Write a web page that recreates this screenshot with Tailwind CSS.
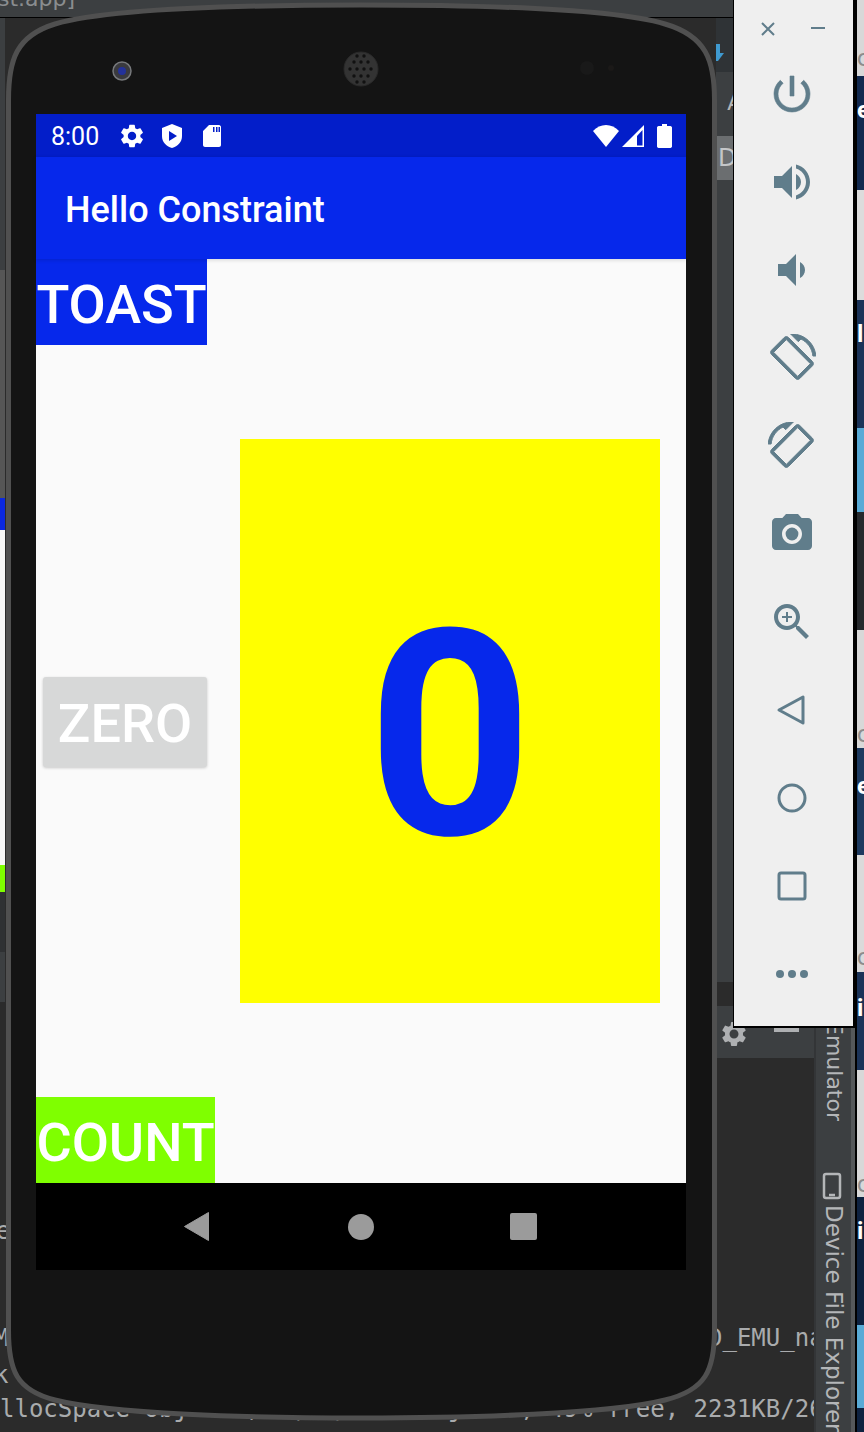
<!DOCTYPE html>
<html lang="en">
<head>
    <meta charset="UTF-8">
    <title>Hello Constraint - Emulator</title>
    <script src="https://cdn.jsdelivr.net/npm/@tailwindcss/browser@4"></script>
</head>
<body class="bg-[#2b2b2b]">
    <div class="relative w-[864px] h-[1432px] overflow-hidden bg-[#2b2b2b] font-['Roboto',sans-serif]">

        <!-- IDE behind the emulator -->
        <div class="absolute left-0 top-0 w-[864px] h-[18px] bg-[#3c3f41] border-b border-black">
            <span class="absolute left-[-2px] top-[-13px] text-[22px] leading-[24px] text-[#8a8d8f] font-['DejaVu_Sans',sans-serif]">st.app]</span>
        </div>
        <div class="absolute left-0 top-[18px] w-[5px] h-[1414px] flex flex-col">
            <div class="h-[252px] bg-[#3c3f41]"></div>
            <div class="h-[228px] bg-[#565656]"></div>
            <div class="h-[32px] bg-[#0a28e0]"></div>
            <div class="h-[335px] bg-[#f7f7f7]"></div>
            <div class="h-[27px] bg-[#7fff00]"></div>
            <div class="h-[60px] bg-[#2f3133]"></div>
            <div class="h-[50px] bg-[#3c3f41]"></div>
            <div class="flex-1 bg-[#2b2b2b]"></div>
        </div>
        <div class="absolute left-[716px] top-[18px] w-[17px] h-[1010px] flex flex-col overflow-hidden">
            <div class="h-[54px] bg-[#2f3336]"></div>
            <div class="h-[64px] bg-[#3c3f41] text-[#b5b5b5] text-[24px] leading-[60px] pl-[11px]">A</div>
            <div class="h-[44px] bg-[#6b6e70] text-[#c4c6c8] text-[24px] leading-[44px] pl-[2px] font-['DejaVu_Sans',sans-serif]">De</div>
            <div class="flex-1 bg-[#3c3f41]"></div>
            <div class="h-[46px] bg-[#2b2b2b]"></div>
        </div>
        <svg class="absolute left-[712px] top-[44px] w-[14px] h-[18px]" viewBox="0 0 14 18"><path fill="#3f9ad0" d="M4 0 H8 V9 H12 L6 17 H4 Z"/></svg>
        <div class="absolute left-[716px] top-[1006px] w-[98px] h-[52px] bg-[#3c3f41]">
            <svg class="absolute left-[3px] top-[13px] w-[30px] h-[30px] fill-[#aeb0b2]" viewBox="0 0 24 24"><path d="M19.14 12.94c.04-.3.06-.61.06-.94 0-.32-.02-.64-.07-.94l2.03-1.58c.18-.14.23-.41.12-.61l-1.92-3.32c-.12-.22-.37-.29-.59-.22l-2.39.96c-.5-.38-1.03-.7-1.62-.94l-.36-2.54c-.04-.24-.24-.41-.48-.41h-3.84c-.24 0-.43.17-.47.41l-.36 2.54c-.59.24-1.13.57-1.62.94l-2.39-.96c-.22-.08-.47 0-.59.22L2.74 8.87c-.12.21-.08.47.12.61l2.03 1.58c-.05.3-.09.63-.09.94s.02.64.07.94l-2.03 1.58c-.18.14-.23.41-.12.61l1.92 3.32c.12.22.37.29.59.22l2.39-.96c.5.38 1.03.7 1.62.94l.36 2.54c.05.24.24.41.48.41h3.84c.24 0 .44-.17.47-.41l.36-2.54c.59-.24 1.13-.56 1.62-.94l2.39.96c.22.08.47 0 .59-.22l1.92-3.32c.12-.22.07-.47-.12-.61l-2.01-1.58zM12 15.6c-1.98 0-3.6-1.62-3.6-3.6s1.62-3.6 3.6-3.6 3.6 1.62 3.6 3.6-1.62 3.6-3.6 3.6z"/></svg>
            <div class="absolute left-[58px] top-[21px] w-[25px] h-[5px] bg-[#aeb0b2]"></div>
        </div>

        <!-- log output -->
        <div class="absolute left-[-4px] top-[1213px] text-[24px] text-[#a9abad] font-['DejaVu_Sans_Mono',monospace]">e</div>
        <div class="absolute left-[-6px] top-[1320px] text-[24px] text-[#a9abad] font-['DejaVu_Sans_Mono',monospace]">M</div>
        <div class="absolute left-[-6px] top-[1357px] text-[24px] text-[#a9abad] font-['DejaVu_Sans_Mono',monospace]">k</div>
        <div class="absolute left-0 top-[1391px] text-[24px] text-[#a9abad] whitespace-nowrap font-['DejaVu_Sans_Mono',monospace]">llocSpace objects, 0(0B) LOS objects, 49% free, 2231KB/26MB</div>
        <div class="absolute left-[708px] top-[1320px] text-[24px] text-[#a9abad] whitespace-nowrap font-['DejaVu_Sans_Mono',monospace]">D_EMU_nav</div>

        <!-- IDE tool strip -->
        <div class="absolute left-[814px] top-[1020px] w-[41px] h-[412px] bg-[#3c3f41] border-l-2 border-r-4 border-l-[#333537] border-r-[#55585a] text-[#b4b6b8] font-['DejaVu_Sans',sans-serif]">
            <div class="absolute left-[3px] top-[1px] text-[22px] leading-[30px] [writing-mode:vertical-rl]">Emulator</div>
            <svg class="absolute left-[5px] top-[152px] w-[22px] h-[28px] fill-none stroke-[#b4b6b8] stroke-[2.5]" viewBox="0 0 22 28"><rect x="3" y="2" width="16" height="24" rx="2"/><path d="M8 23h6"/></svg>
            <div class="absolute left-[3px] top-[185px] text-[23px] leading-[30px] whitespace-nowrap [writing-mode:vertical-rl]">Device File Explorer</div>
        </div>

        <!-- desktop wallpaper strip -->
        <div class="absolute left-[855px] top-0 w-[9px] h-[1432px] flex flex-col overflow-hidden border-l-2 border-black text-[24px] font-bold leading-none">
            <div class="h-[76px] bg-[#d8d8d8] text-[#8d8d8d] font-normal pt-[46px]">oo</div>
            <div class="h-[114px] bg-[#12294f] text-white pt-[22px]">e</div>
            <div class="h-[110px] bg-[#dcdcdc]"></div>
            <div class="h-[128px] bg-[#1b3358] text-white pt-[22px]">l</div>
            <div class="h-[84px] bg-[#58aad6]"></div>
            <div class="h-[118px] bg-[#26292d]"></div>
            <div class="h-[118px] bg-[#d8d8d8] text-[#8d8d8d] font-normal pt-[92px]">oo</div>
            <div class="h-[107px] bg-[#1d3a5f] text-white pt-[26px]">e</div>
            <div class="h-[117px] bg-[#dadada] text-[#8d8d8d] font-normal pt-[90px]">oo</div>
            <div class="h-[98px] bg-[#1b3358] text-white pt-[24px]">i</div>
            <div class="h-[127px] bg-[#d8d8d8] text-[#8d8d8d] font-normal pt-[102px]">oo</div>
            <div class="h-[128px] bg-[#0e2240] text-white pt-[22px]">i</div>
            <div class="h-[83px] bg-[#58aad6]"></div>
            <div class="flex-1 bg-[#0e2240]"></div>
        </div>

        <!-- phone body -->
        <svg class="absolute left-0 top-0 w-[864px] h-[1432px]" viewBox="0 0 864 1432">
            <path d="M8.500 100 C8.500 60 16 36 55 24 C110 8 250 5 361 5 C470 5 610 8 665 24 C706 36 714.500 60 714.500 100 L714.500 1330 C714.500 1370 706 1390 665 1400 C610 1414 470 1418 361 1418 C250 1418 110 1414 55 1400 C16 1390 8.500 1370 8.500 1330 Z" fill="#141414" stroke="#505050" stroke-width="5"/>
            <circle cx="122" cy="71" r="9" fill="#3a3a3e" stroke="#77797c" stroke-width="1.500"/>
            <circle cx="122" cy="71" r="4" fill="#23319a"/>
            <circle cx="361" cy="69" r="17" fill="#333333" stroke="#2a2a2a"/>
            <g fill="#111111">
                <circle cx="354" cy="62" r="1.700"/><circle cx="361" cy="62" r="1.700"/><circle cx="368" cy="62" r="1.700"/>
                <circle cx="350" cy="69" r="1.700"/><circle cx="357" cy="69" r="1.700"/><circle cx="364" cy="69" r="1.700"/><circle cx="371" cy="69" r="1.700"/>
                <circle cx="354" cy="76" r="1.700"/><circle cx="361" cy="76" r="1.700"/><circle cx="368" cy="76" r="1.700"/>
                <circle cx="357" cy="56" r="1.700"/><circle cx="364" cy="56" r="1.700"/><circle cx="357" cy="82" r="1.700"/><circle cx="364" cy="82" r="1.700"/>
            </g>
            <circle cx="587" cy="68" r="7" fill="#191919"/>
            <circle cx="611" cy="68" r="3" fill="#1b1918"/>
        </svg>

        <!-- emulator screen -->
        <div class="absolute left-[36px] top-[114px] w-[650px] h-[1156px] flex flex-col">
            <div class="h-[43px] bg-[#031ec9] flex items-center text-white pl-[15px] pr-[14px]">
                <span class="text-[25px] leading-none w-[67px] mt-[2px]">8:00</span>
                <svg class="w-[28px] h-[28px] fill-white mr-[15px]" viewBox="0 0 24 24"><path d="M19.14 12.94c.04-.3.06-.61.06-.94 0-.32-.02-.64-.07-.94l2.03-1.58c.18-.14.23-.41.12-.61l-1.92-3.32c-.12-.22-.37-.29-.59-.22l-2.39.96c-.5-.38-1.03-.7-1.62-.94l-.36-2.54c-.04-.24-.24-.41-.48-.41h-3.84c-.24 0-.43.17-.47.41l-.36 2.54c-.59.24-1.13.57-1.62.94l-2.39-.96c-.22-.08-.47 0-.59.22L2.74 8.87c-.12.21-.08.47.12.61l2.03 1.58c-.05.3-.09.63-.09.94s.02.64.07.94l-2.03 1.58c-.18.14-.23.41-.12.61l1.92 3.32c.12.22.37.29.59.22l2.39-.96c.5.38 1.03.7 1.62.94l.36 2.54c.05.24.24.41.48.41h3.84c.24 0 .44-.17.47-.41l.36-2.54c.59-.24 1.13-.56 1.62-.94l2.39.96c.22.08.47 0 .59-.22l1.92-3.32c.12-.22.07-.47-.12-.61l-2.01-1.58zM12 15.6c-1.98 0-3.6-1.62-3.6-3.6s1.62-3.6 3.6-3.6 3.6 1.62 3.6 3.6-1.62 3.6-3.6 3.6z"/></svg>
                <svg class="w-[22px] h-[26px] mr-[19px]" viewBox="0 0 22 26"><path fill="#fff" fill-rule="evenodd" d="M11 1 L21 5 V13 C21 19 17 23 11 25 C5 23 1 19 1 13 V5 Z M8 8 V18 L16 13 Z"/></svg>
                <svg class="w-[20px] h-[24px]" viewBox="0 0 20 24"><path fill="#fff" fill-rule="evenodd" d="M7 1 H17 C18 1 19 2 19 3 V21 C19 22 18 23 17 23 H3 C2 23 1 22 1 21 V7 Z M11 3 V8 H12.500 V3 Z M14 3 V8 H15.500 V3 Z M16.500 3 V8 H18 V3 Z"/></svg>
                <div class="flex-1"></div>
                <svg class="w-[28px] h-[23px] mr-[1px]" viewBox="0 0 28 23"><path fill="#fff" d="M1 7 C8 -1 20 -1 27 7 L14 23 Z"/></svg>
                <svg class="w-[24px] h-[23px] mr-[12px]" viewBox="0 0 24 23"><path fill="#fff" fill-rule="evenodd" d="M23 1 V23 H1 Z M21.500 6 L16 12 V21.500 H21.500 Z"/></svg>
                <svg class="w-[15px] h-[24px]" viewBox="0 0 15 24"><path fill="#fff" d="M5 0 H10 V2 H13.500 C14 2 15 3 15 3.500 V22.500 C15 23 14 24 13.500 24 H1.500 C1 24 0 23 0 22.500 V3.500 C0 3 1 2 1.500 2 H5 Z"/></svg>
            </div>
            <div class="relative z-10 h-[102px] bg-[#0628eb] shadow-[0_1px_4px_rgba(0,0,0,0.15)] flex items-center pl-[29px] pt-[4px] text-white text-[36px] font-medium">Hello Constraint</div>
            <div class="flex flex-1 bg-[#fafafa]">
                <div class="w-[204px] flex flex-col justify-between items-start font-medium text-[54px] text-white">
                    <div class="w-[171px] h-[86px] bg-[#0628eb] leading-[92px] text-center">TOAST</div>
                    <div class="ml-[7px] mt-[2px] w-[164px] h-[90px] bg-[#d7d8d8] rounded-[3px] shadow-[0_1px_3px_rgba(0,0,0,0.2)] leading-[94px] text-center">ZERO</div>
                    <div class="w-[179px] h-[86px] bg-[#7fff00] leading-[92px] text-center">COUNT</div>
                </div>
                <div class="w-[420px] h-[564px] self-center bg-[#ffff00] flex items-center justify-center pt-[30px] text-[#0628eb] text-[288px] font-bold leading-none">0</div>
            </div>
            <div class="h-[87px] bg-black">
                <svg class="w-[650px] h-[87px]" viewBox="0 0 650 87" fill="#9b9b9b">
                    <path d="M148.500 43.500 L172.500 29.500 V57.500 Z" stroke="#9b9b9b" stroke-linejoin="round" stroke-width="1"/>
                    <circle cx="325" cy="44" r="13"/>
                    <rect x="474" y="30" width="27" height="27" rx="2"/>
                </svg>
            </div>
        </div>

        <!-- emulator toolbar -->
        <div class="absolute left-[733px] top-[-2px] w-[122px] h-[1030px] bg-[#efefef] border-l border-r-2 border-b-2 border-black flex flex-col items-center pr-[4px]">
            <div class="w-full h-[30px] mt-[16px] relative">
                <svg class="absolute left-[25px] top-[6px] w-[18px] h-[18px] stroke-[#607d8b] stroke-2" viewBox="0 0 18 18"><path d="M3 3 L15 15 M15 3 L3 15"/></svg>
                <div class="absolute left-[77px] top-[13px] w-[14px] h-[2px] bg-[#607d8b]"></div>
            </div>
            <div class="flex flex-col items-center mt-[26px] gap-[40px] text-[#607d8b]">
                <svg class="w-[48px] h-[48px] fill-current stroke-current stroke-[0.3]" viewBox="0 0 24 24"><path d="M13 3h-2v10h2V3zm4.830 2.170l-1.420 1.420C17.990 7.860 19 9.810 19 12c0 3.870-3.130 7-7 7s-7-3.130-7-7c0-2.190 1.010-4.140 2.580-5.420L6.170 5.170C4.230 6.820 3 9.260 3 12c0 4.970 4.030 9 9 9s9-4.030 9-9c0-2.740-1.230-5.180-3.170-6.830z"/></svg>
                <svg class="w-[48px] h-[48px] fill-current" viewBox="0 0 24 24"><path d="M3 9v6h4l5 5V4L7 9H3zm13.500 3c0-1.770-1.020-3.290-2.500-4.030v8.050c1.480-.73 2.500-2.250 2.500-4.020zM14 3.230v2.060c2.890.86 5 3.540 5 6.710s-2.110 5.850-5 6.710v2.060c4.010-.91 7-4.490 7-8.770s-2.990-7.860-7-8.770z"/></svg>
                <svg class="w-[48px] h-[48px] fill-current" viewBox="0 0 24 24"><path d="M18.500 12c0-1.770-1.020-3.290-2.500-4.030v8.050c1.480-.73 2.500-2.250 2.500-4.020zM5 9v6h4l5 5V4L9 9H5z"/></svg>
                <svg class="w-[48px] h-[48px] fill-current stroke-current stroke-[0.5]" viewBox="0 0 24 24"><path d="M16.480 2.520c3.270 1.550 5.610 4.720 5.970 8.480h1.500C23.440 4.840 18.290 0 12 0l-.66.030 3.810 3.810 1.330-1.320zm-6.250-.77c-.59-.59-1.540-.59-2.120 0L1.750 8.110c-.59.590-.59 1.540 0 2.120l12.020 12.020c.59.590 1.540.590 2.120 0l6.360-6.360c.59-.59.590-1.540 0-2.120L10.230 1.750zm4.600 19.440L2.810 9.170l6.360-6.360 12.020 12.020-6.360 6.360z"/></svg>
                <svg class="w-[48px] h-[48px] fill-current stroke-current stroke-[0.5] -scale-x-100" viewBox="0 0 24 24"><path d="M16.480 2.520c3.270 1.550 5.610 4.720 5.970 8.480h1.500C23.440 4.840 18.290 0 12 0l-.66.030 3.810 3.810 1.330-1.320zm-6.250-.77c-.59-.59-1.540-.59-2.120 0L1.750 8.110c-.59.590-.59 1.540 0 2.120l12.020 12.020c.59.590 1.540.590 2.120 0l6.360-6.360c.59-.59.590-1.540 0-2.120L10.230 1.750zm4.600 19.440L2.810 9.170l6.360-6.360 12.020 12.020-6.360 6.360z"/></svg>
                <svg class="w-[48px] h-[48px] fill-current" viewBox="0 0 24 24"><circle cx="12" cy="12" r="3.200"/><path d="M9 2L7.170 4H4c-1.100 0-2 .9-2 2v12c0 1.100.9 2 2 2h16c1.100 0 2-.9 2-2V6c0-1.100-.9-2-2-2h-3.170L15 2H9zm3 15c-2.760 0-5-2.240-5-5s2.240-5 5-5 5 2.240 5 5-2.240 5-5 5z"/></svg>
                <svg class="w-[48px] h-[48px] fill-current" viewBox="0 0 24 24"><path d="M15.500 14h-.79l-.28-.27C15.410 12.590 16 11.110 16 9.500 16 5.910 13.090 3 9.500 3S3 5.910 3 9.500 5.910 16 9.500 16c1.610 0 3.090-.59 4.230-1.570l.27.28v.79l5 4.990L20.490 19l-4.990-5zm-6 0C7.010 14 5 11.990 5 9.500S7.010 5 9.500 5 14 7.010 14 9.500 11.990 14 9.500 14z"/><path d="M12 10h-2v2H9v-2H7V9h2V7h1v2h2v1z"/></svg>
                <svg class="w-[48px] h-[48px] fill-none stroke-current" stroke-width="1.500" stroke-linejoin="round" viewBox="0 0 24 24"><path d="M5.500 12 L17.500 5.500 V18.500 Z"/></svg>
                <svg class="w-[48px] h-[48px] fill-none stroke-current" stroke-width="1.500" viewBox="0 0 24 24"><circle cx="12" cy="12" r="6.500"/></svg>
                <svg class="w-[48px] h-[48px] fill-none stroke-current" stroke-width="1.500" viewBox="0 0 24 24"><rect x="5.500" y="5.500" width="13" height="13" rx="1"/></svg>
                <svg class="w-[48px] h-[48px] fill-current" viewBox="0 0 24 24"><circle cx="6" cy="12" r="2"/><circle cx="12" cy="12" r="2"/><circle cx="18" cy="12" r="2"/></svg>
            </div>
        </div>
    </div>
</body>
</html>
